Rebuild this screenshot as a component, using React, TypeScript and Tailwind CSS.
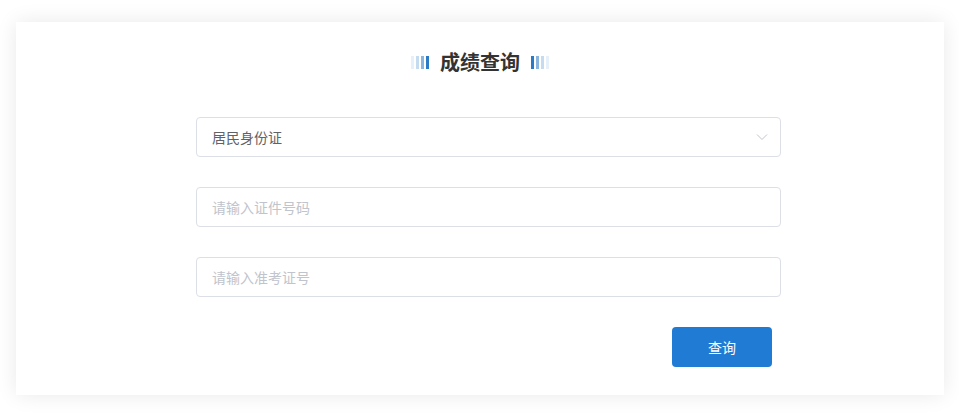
const font = {
  fontFamily: '"Microsoft YaHei", "Noto Sans CJK SC", sans-serif',
};

function Bars({ reverse }: { reverse?: boolean }) {
  const colors = ["bg-[#e6f0fa]", "bg-[#c5dbef]", "bg-[#8ab5de]", "bg-[#2a7ac6]"];
  const list = reverse ? [...colors].reverse() : colors;
  return (
    <div className="flex items-center gap-[2px]">
      {list.map((c, i) => (
        <span key={i} className={`block h-[13px] w-[3px] ${c}`} />
      ))}
    </div>
  );
}

export default function App() {
  return (
    <div className="min-h-screen bg-white pl-4 pt-[22px]" style={font}>
      <div className="h-[373px] w-[928px] bg-white pt-[28px] shadow-[0_0_20px_rgba(0,0,0,0.09)]">
        <div className="flex items-center justify-center gap-[11px]">
          <Bars />
          <h1 className="text-[20px] font-bold leading-[24px] text-[#333]">成绩查询</h1>
          <Bars reverse />
        </div>

        <div className="ml-[180px] mt-[43px] flex w-[585px] flex-col gap-[30px]">
          <div className="flex h-10 items-center justify-between rounded border border-[#dcdfe6] pl-[15px] pr-3 text-sm text-[#606266]">
            <span>居民身份证</span>
            <svg width="12" height="12" viewBox="0 0 12 12" fill="none">
              <path d="M1 3.5 6 8.5 11 3.5" stroke="#c0c4cc" strokeWidth="1" />
            </svg>
          </div>
          <input
            className="h-10 rounded border border-[#dcdfe6] px-[15px] text-sm text-[#606266] outline-none placeholder:text-[#c0c4cc]"
            placeholder="请输入证件号码"
          />
          <input
            className="h-10 rounded border border-[#dcdfe6] px-[15px] text-sm text-[#606266] outline-none placeholder:text-[#c0c4cc]"
            placeholder="请输入准考证号"
          />
          <div className="flex justify-end pr-[9px]">
            <button className="h-10 w-[100px] rounded bg-[#1f7bd3] text-sm text-white">查询</button>
          </div>
        </div>
      </div>
    </div>
  );
}
